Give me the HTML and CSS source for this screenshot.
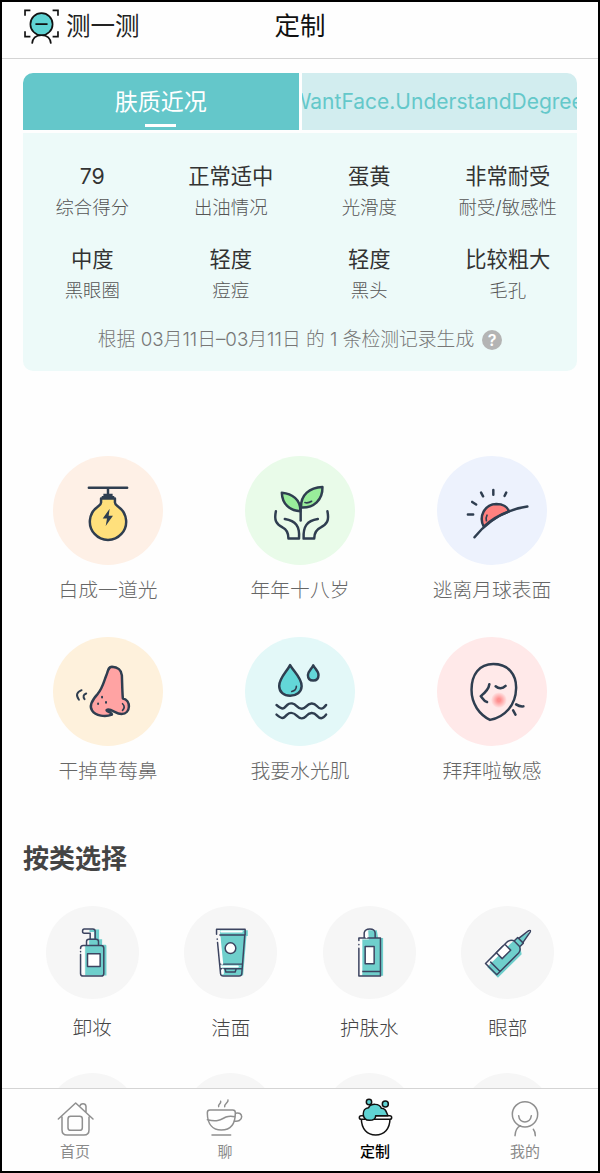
FILE: index.html
```
<!DOCTYPE html>
<html lang="zh-CN">
<head>
  <meta charset="UTF-8" />
  <meta name="viewport" content="width=device-width, initial-scale=1.0"/>
  <title>定制</title>
  <link rel="stylesheet" href="styles.css">
</head>
<body>
  <header>
    <a class="scan" href="#">
      <svg viewBox="70 22 110 110" fill="none" stroke="#111" stroke-width="5">
        <path d="M76 45V29h16M158 29h16v16M76 91v16h16M158 107h16V91" />
        <circle cx="125" cy="70" r="33" fill="#5fd3d3" />
        <path d="M107 70h36M97 128c1-14 10-25 28-25s27 11 28 25" />
      </svg>
      <span>测一测</span>
    </a>
    <h1>定制</h1>
  </header>

  <main>
    <section class="report">
      <div class="tabs">
        <div class="tab active">肤质近况</div>
        <div class="tab"><span>WantFace.UnderstandDegree</span></div>
      </div>
      <div class="panel">
        <div class="stats">
          <div class="stat"><b>79</b><span>综合得分</span></div>
          <div class="stat"><b>正常适中</b><span>出油情况</span></div>
          <div class="stat"><b>蛋黄</b><span>光滑度</span></div>
          <div class="stat"><b>非常耐受</b><span>耐受/敏感性</span></div>
          <div class="stat"><b>中度</b><span>黑眼圈</span></div>
          <div class="stat"><b>轻度</b><span>痘痘</span></div>
          <div class="stat"><b>轻度</b><span>黑头</span></div>
          <div class="stat"><b>比较粗大</b><span>毛孔</span></div>
        </div>
        <p class="note"><span>根据 03月11日–03月11日 的 1 条检测记录生成</span><i>?</i></p>
      </div>
    </section>

    <section class="concerns">
      <a class="concern" href="#">
        <svg class="peach" viewBox="40 15 330 330">
          <path d="M147 111h116M205 111v22" />
          <path d="M184 144v12c0 6-6 9-12 14a55 55 0 1 0 66 0c-6-5-12-8-12-14v-12z" fill="#ffe07c" />
          <path class="solid" d="M191 129h28v7h5v9h-38v-9h5z" />
          <path class="solid" d="M210 175l-21 29h13l-4 23 22-31h-13z" />
        </svg>
        <span>白成一道光</span>
      </a>
      <a class="concern" href="#">
        <svg class="green" viewBox="615 15 330 330">
          <path d="M782 210v-40" />
          <path d="M781 182c-33-1-55-23-56-56 31 3 57 20 56 56z" fill="#99ed9b" />
          <path d="M783 171c-1-39 26-60 65-62 1 39-26 64-65 62z" fill="#99ed9b" />
          <path d="M795 156c8 2 14 0 20-4" stroke-width="5" />
          <path d="M707 182c-6 28 1 39 20 49 13 6 18 18 18 34h32c3-38-10-53-43-59M863 182c6 28-1 39-20 49-13 6-20 18-20 34h-32c-2-38 10-53 43-59" />
        </svg>
        <span>年年十八岁</span>
      </a>
      <a class="concern" href="#">
        <svg class="blue" viewBox="230 15 330 330">
          <path d="M370 229c-16-30 2-68 38-69 20 0 35 9 38 23-28 10-53 25-76 46z" fill="#ff817f" />
          <path d="M342 261c42-52 92-83 160-93M399 118v14M438 126l-5 10M362 126l6 11M335 154l12 8M322 192h16" />
          <path d="M380 194c-3 6-4 11-2 17" stroke-width="5" />
        </svg>
        <span>逃离月球表面</span>
      </a>
      <a class="concern" href="#">
        <svg class="yellow" viewBox="40 20 330 330">
          <path d="M217 110c17 1 29 11 30 26 1 23 1 48 3 70 25 5 25 46-4 47-17 0-30-16-43-13-10 3 15 9 14 15-20 8-50 4-60-12-11-16 4-37 17-51 15-18 18-36 26-56 6-15 5-25 17-26z" fill="#ffa3a3" />
          <path d="M249 222c6 6 6 14 0 20" stroke-width="5" />
          <path d="M187 201v2M175 221v2M199 217v2M125 181c-15 6-18 16-8 29M139 191c-9 3-10 10-5 17" stroke-width="6" />
        </svg>
        <span>干掉草莓鼻</span>
      </a>
      <a class="concern" href="#">
        <svg class="cyan" viewBox="615 20 330 330">
          <path d="M750 105c11 20 36 39 35 64-1 18-16 29-35 29s-33-12-33-30c0-24 23-43 33-63z" fill="#63d7d8" />
          <path d="M820 106c6 11 16 18 16 29 0 11-6 17-16 17s-16-6-16-17c0-11 11-18 16-29z" fill="#63d7d8" />
          <path d="M769 169c0 8-5 14-14 16" stroke-width="5" />
          <path d="M709 226c19 15 20 13 32 0 9-8 21-5 29 3 10 10 18 12 28 2 11-12 23-13 33-2 9 10 17 12 28-3M709 255c19 15 20 13 32 0 9-8 21-5 29 3 10 10 18 12 28 2 11-12 23-13 33-2 9 10 17 12 28-3" />
        </svg>
        <span>我要水光肌</span>
      </a>
      <a class="concern" href="#">
        <svg class="pink" viewBox="230 20 330 330">
          <defs>
            <radialGradient id="blush">
              <stop offset="0.2" stop-color="#ff8f8f" />
              <stop offset="1" stop-color="#ffe7e7" />
            </radialGradient>
          </defs>
          <circle cx="416" cy="211" r="24" fill="url(#blush)" stroke="none" />
          <path d="M389 271c-32-16-56-48-56-91 0-46 23-78 66-78 46 0 70 32 69 73-1 52-35 88-79 96z" />
          <path d="M387 163c-2 16-12 25-26 36 6 7 8 15 19 18M406 169c9 8 21 8 30-1M468 224c7 5 13 7 22 6M459 242l7 13" />
        </svg>
        <span>拜拜啦敏感</span>
      </a>
    </section>

    <section class="category">
      <h2>按类选择</h2>
      <div class="items">
        <a class="item" href="#">
          <svg viewBox="137 226 280 280">
            <path class="tint" d="M268 297h29v29h9v17h10q3 0 3 4v88h-64v-91h12v-20h15v-20h-14z" />
            <path d="M270 326v-18h-18q-5 0-5-6 0-7 5-7h26q7 0 7 7v24M259 343v-10q0-7 7-7h22q7 0 7 7v10M241 372v57q0 8 8 8h54q8 0 8-8v-76q0-8-8-8h-54q-8 0-8 9M241 363v1" />
            <path class="light" d="M249 352v73" />
            <path class="paper" d="M262 370h38v38h-38z" />
          </svg>
          <span>卸妆</span>
        </a>
        <a class="item" href="#">
          <svg viewBox="552 226 280 280">
            <path class="tint" d="M660 299h84v17h-4l-10 119h-63z" />
            <path d="M650 311v-15h86v17h-76M652 325v1M653 336l9 94q1 7 8 7h48q7 0 8-7l9-117M661 401h65M662 415h64M676 416l2 9h28l3-9" />
            <path class="light" d="M659 320l8 80M666 408h48M669 417v12M664 303h62" />
            <circle class="paper" cx="692" cy="353" r="16" />
          </svg>
          <span>洁面</span>
        </a>
        <a class="item" href="#">
          <svg viewBox="67 46 280 280">
            <path class="tint" d="M203 119h26l4 23h15v114h-63v-109h20z" />
            <path d="M191 141v-14q2-12 17-12t16 12v14M175 150v-8h65v115h-65v-84M175 162v1M184 243h56" />
            <path class="light" d="M198 125v15M182 149v102" />
            <path class="paper" d="M194 168h27v52h-27z" />
          </svg>
          <span>护肤水</span>
        </a>
        <a class="item" href="#">
          <svg viewBox="483 46 280 280">
            <g transform="translate(624 186) rotate(45)">
              <path class="tint" d="M-12-46l16-49 8 44 4 14 17 11v101h-46v-97z" />
              <path d="M-7-53l5-38q3-7 6 0l7 38M-11-41v-12h24v12M-24-14v-8q3-14 14-16h21q12 4 13 16v93h-48v-73M-24-20v1M-16 57h40" />
              <path class="light" d="M-17-18v64" />
              <path class="paper" d="M-24-11h25v36h-25z" />
            </g>
          </svg>
          <span>眼部</span>
        </a>
        <a class="item" href="#"><svg></svg></a>
        <a class="item" href="#"><svg></svg></a>
        <a class="item" href="#"><svg></svg></a>
        <a class="item" href="#"><svg></svg></a>
      </div>
    </section>
  </main>

  <nav>
    <a href="#">
      <svg viewBox="165 115 120 120">
        <path d="M175 178l52-48 52 48M186 172v39q0 15 15 15h51q15 0 15-15v-39M240 139q1-7 9-7t9 8v17" />
        <rect x="204" y="170" width="43" height="42" rx="8" />
      </svg>
      <span>首页</span>
    </a>
    <a href="#">
      <svg viewBox="615 115 120 120">
        <path d="M630 151h68q8 0 8 8c0 37-17 52-42 52s-42-17-42-52q0-8 8-8zM622 180c35 8 42-2 56-8 10-4 18-3 27-1M706 161q18-4 19 10c0 11-11 15-23 13M636 226h56M656 141c-3-6 8-9 6-16M674 141c-2-8 12-12 10-20" />
      </svg>
      <span>聊</span>
    </a>
    <a class="current" href="#">
      <svg viewBox="165 115 120 120">
        <path d="M184 176c0 33 18 50 43 50s43-17 43-50" fill="#fff" />
        <rect x="178" y="168" width="97" height="11" rx="5.5" fill="#fff" />
        <path d="M208 182c-24 0-24-37-2-38 6-13 33-14 38 2 12 0 14 9 20 22h-37c0 9-7 14-19 14z" fill="#5fd3d3" />
        <circle cx="207" cy="127" r="8" fill="#5fd3d3" />
        <circle cx="256" cy="133" r="9" fill="#5fd3d3" />
      </svg>
      <span>定制</span>
    </a>
    <a href="#">
      <svg viewBox="615 115 120 120">
        <circle cx="675" cy="164" r="38" />
        <path d="M656 168c2 25 35 25 38 0M645 228c1-16 5-24 16-30M700 209c4 5 6 11 6 19" />
      </svg>
      <span>我的</span>
    </a>
  </nav>
</body>
</html>
```

FILE: styles.css
```
* {
  margin: 0;
  padding: 0;
  box-sizing: border-box;
}

body {
  display: flex;
  flex-direction: column;
  width: 600px;
  height: 1173px;
  border: 2px solid #000;
  overflow: hidden;
  background-color: #fefefe;
  font-family: Inter, 'Noto Sans CJK SC', sans-serif;
}

a {
  color: inherit;
  text-decoration: none;
}

header {
  position: relative;
  display: flex;
  align-items: center;
  flex-shrink: 0;
  height: 57px;
  padding: 0 21px 8px;
  border-bottom: 1px solid #d4d4d4;
}

header h1 {
  position: absolute;
  left: 0;
  width: 100%;
  text-align: center;
  font-size: 25.5px;
  font-weight: 400;
  line-height: 36px;
  color: #111;
  pointer-events: none;
}

.scan {
  display: flex;
  align-items: center;
  gap: 6px;
  font-size: 24.5px;
  line-height: 36px;
  color: #222;
}

.scan svg {
  width: 37px;
  height: 37px;
}

main {
  flex: 1;
  min-height: 0;
  overflow: hidden;
}

.report {
  margin: 14px 21px 0;
}

.tabs {
  display: flex;
  gap: 3px;
  height: 57px;
  border-radius: 10px 10px 0 0;
  overflow: hidden;
}

.tab {
  position: relative;
  display: flex;
  flex: 1;
  min-width: 0;
  justify-content: center;
  overflow: hidden;
  background-color: #d2edef;
  color: #64c8ca;
  font-size: 21px;
  line-height: 58px;
  white-space: nowrap;
}

.tab span {
  margin-right: 4px;
}

.tab.active {
  background-color: #64c7ca;
  color: #fff;
  font-size: 23px;
}

.tab.active::after {
  content: "";
  position: absolute;
  bottom: 3px;
  width: 31px;
  height: 3px;
  background-color: #fff;
}

.panel {
  height: 238px;
  margin-top: 3px;
  padding-top: 27px;
  border-radius: 0 0 10px 10px;
  background-color: #edfaf9;
}

.stats {
  display: grid;
  grid-template-columns: repeat(4, 1fr);
  row-gap: 21px;
}

.stat {
  display: flex;
  flex-direction: column;
  align-items: center;
  white-space: nowrap;
}

.stat b {
  font-size: 21.3px;
  font-weight: 400;
  line-height: 32px;
  color: #333;
}

.stat span {
  font-size: 18.4px;
  font-weight: 300;
  line-height: 30px;
  color: #555;
}

.note {
  display: flex;
  justify-content: center;
  align-items: center;
  gap: 8px;
  margin-top: 20px;
  font-size: 18.8px;
  font-weight: 300;
  line-height: 30px;
  color: #777;
}

.note i {
  width: 20px;
  height: 20px;
  border-radius: 50%;
  background-color: #b4b4b4;
  color: #fff;
  font-size: 16px;
  font-style: normal;
  font-weight: 600;
  line-height: 20px;
  text-align: center;
}

.concerns {
  display: grid;
  grid-template-columns: repeat(3, 1fr);
  row-gap: 32px;
  margin: 85px 10px 0;
}

.concern {
  display: flex;
  flex-direction: column;
  align-items: center;
  height: 149px;
  font-size: 19.8px;
  font-weight: 300;
  color: #666;
}

.concern svg {
  width: 110px;
  height: 110px;
  border-radius: 50%;
  fill: none;
  stroke: #2f3e50;
  stroke-width: 7.5;
  stroke-linecap: round;
  stroke-linejoin: round;
}

.concern .solid {
  fill: #2f3e50;
  stroke: none;
}

.concern span {
  margin-top: 10px;
  line-height: 30px;
}

.peach { background-color: #fef0e6; }
.green { background-color: #e9fbe9; }
.blue { background-color: #edf2fd; }
.yellow { background-color: #fef1dc; }
.cyan { background-color: #e3f8f8; }
.pink { background-color: #ffe9e9; }

.category {
  margin: 54px 21px 0;
}

.category h2 {
  font-size: 26px;
  font-weight: 700;
  line-height: 38px;
  color: #444;
}

.items {
  display: grid;
  grid-template-columns: repeat(4, 1fr);
  row-gap: 30px;
  margin-top: 28px;
}

.item {
  display: flex;
  flex-direction: column;
  align-items: center;
  height: 137px;
  font-size: 19.5px;
  font-weight: 300;
  color: #444;
}

.item svg {
  width: 93px;
  height: 93px;
  border-radius: 50%;
  background-color: #f6f6f6;
  fill: none;
  stroke: #3c4460;
  stroke-width: 4.5;
  stroke-linecap: round;
  stroke-linejoin: round;
}

.item span {
  margin-top: 14px;
  line-height: 30px;
}

.item .tint {
  fill: #6fcfcc;
  stroke: none;
}

.item .light {
  stroke: #fff;
  stroke-width: 6;
}

.item .paper {
  fill: #fff;
}

nav {
  display: flex;
  flex-shrink: 0;
  height: 83px;
  margin: 0 -2px;
  border-top: 1px solid #d4d4d4;
  background-color: #fefefe;
}

nav a {
  display: flex;
  flex: 1;
  flex-direction: column;
  align-items: center;
  padding-top: 9px;
  font-size: 15px;
  color: #8a8a8a;
}

nav svg {
  width: 40px;
  height: 40px;
  fill: none;
  stroke: #8f8f8f;
  stroke-width: 4.5;
  stroke-linecap: round;
  stroke-linejoin: round;
}

nav span {
  margin-top: 3px;
  line-height: 22px;
}

nav .current {
  color: #000;
  font-weight: 500;
}

nav .current svg {
  stroke: #111;
  stroke-width: 4.5;
}
```
